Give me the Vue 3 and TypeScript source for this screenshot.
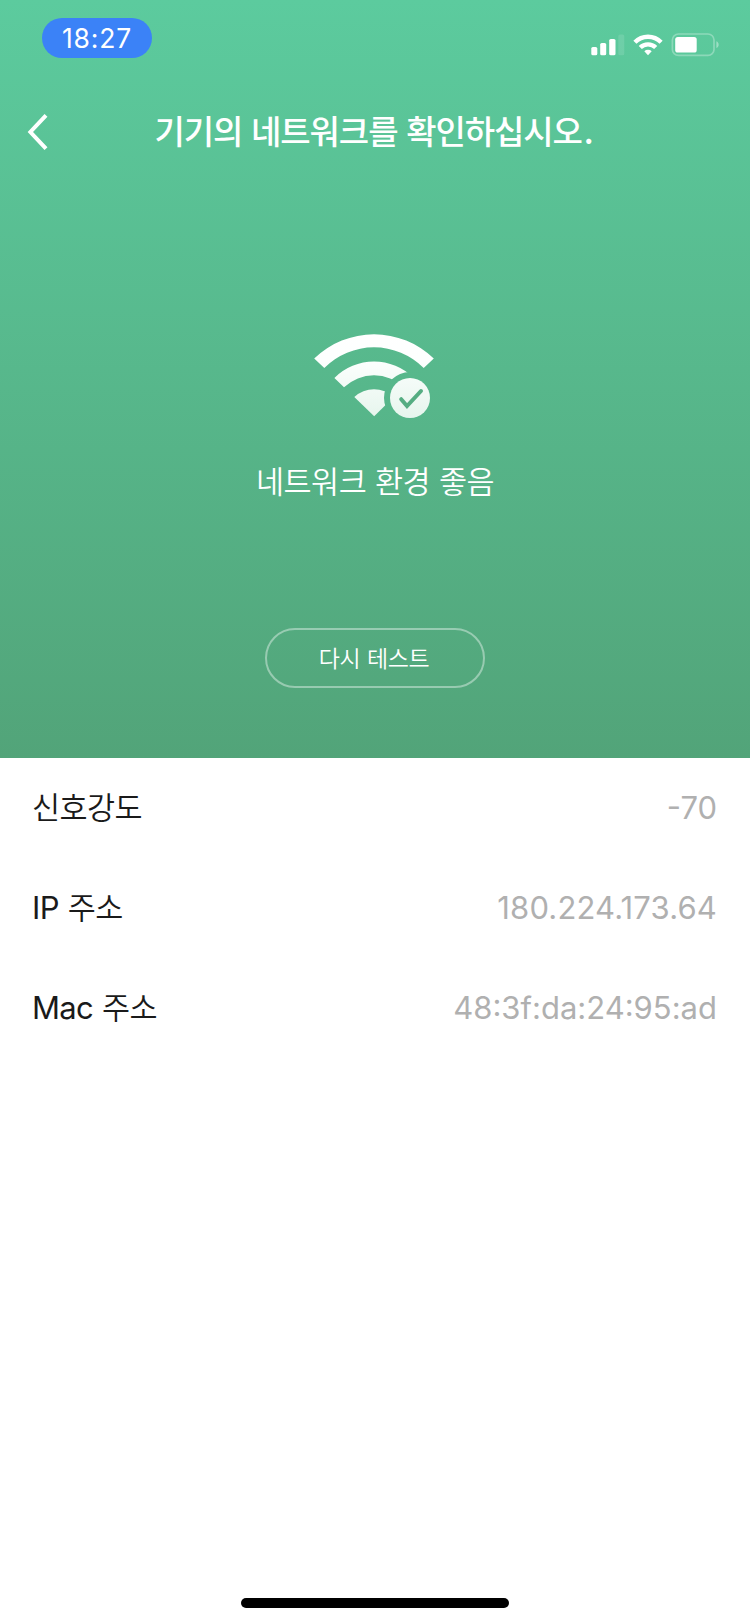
<script setup lang="ts">
interface InfoRow {
  latin: string
  hangul: string
  value: string
  kind: string
}

const rows: InfoRow[] = [
  { latin: '', hangul: '신호강도', value: '-70', kind: 'signal' },
  { latin: 'IP', hangul: '주소', value: '180.224.173.64', kind: 'ip' },
  { latin: 'Mac', hangul: '주소', value: '48:3f:da:24:95:ad', kind: 'mac' },
]
</script>

<template>
  <main class="screen">
    <section class="hero">
      <header class="status">
        <div class="time"><span>18:27</span></div>
        <svg class="indicators" width="132" height="28" viewBox="590 31 132 28" fill="#fff">
          <rect x="591.3" y="47" width="6" height="8.3" rx="1.6" />
          <rect x="600.2" y="43" width="6" height="12.3" rx="1.6" />
          <rect x="609.2" y="39" width="6.3" height="16.3" rx="1.6" />
          <rect x="618.3" y="34.5" width="6" height="20.8" rx="1.6" opacity=".12" />
          <g fill="none" stroke="#fff" stroke-width="4.4">
            <path d="M634.9 42.2a18.6 18.6 0 0 1 26.2 0" />
            <path d="M640.3 47.5a11 11 0 0 1 15.4 0" />
          </g>
          <path d="M644.3 51.2a5.4 5.4 0 0 1 7.4 0L648 55.3z" />
          <rect x="672.4" y="34" width="41.6" height="21.4" rx="6" fill="none" stroke="#fff" stroke-width="1.7" opacity=".3" />
          <rect x="675.2" y="37" width="21.5" height="15.6" rx="2.6" />
          <path d="M716.4 41.3c3 1.2 3 5.6 0 6.8z" opacity=".4" />
        </svg>
      </header>

      <nav class="navbar">
        <svg class="back" width="22" height="38" viewBox="0 0 22 38" fill="none" stroke="#fff" stroke-width="4">
          <path d="M19 2.4 3.4 19 19 35.6" />
        </svg>
        <h1 class="title">기기의 네트워크를 확인하십시오<span class="stop">.</span></h1>
      </nav>

      <svg class="wifi" width="124" height="88" viewBox="313 332 124 88">
        <defs>
          <linearGradient id="shade" gradientUnits="userSpaceOnUse" x1="0" y1="334" x2="0" y2="418">
            <stop offset="0" stop-color="#fff" />
            <stop offset=".3" stop-color="#fdfffe" />
            <stop offset="1" stop-color="#e6f5ed" />
          </linearGradient>
          <mask id="cut" maskUnits="userSpaceOnUse" x="313" y="332" width="124" height="88">
            <rect x="313" y="332" width="124" height="88" fill="#fff" />
            <circle cx="410" cy="398" r="26" fill="#000" />
          </mask>
        </defs>
        <g fill="url(#shade)">
          <g mask="url(#cut)">
            <path d="M314.2 358.5A86 86 0 0 1 433.8 358.5L423.7 368A70 70 0 0 0 324.3 368Z" />
            <path d="M334.4 378A56 56 0 0 1 413.6 378L404 387.3A43.5 43.5 0 0 0 344 387.3Z" />
            <path d="M354.3 397A29 29 0 0 1 393.7 397L374.2 416.2Z" />
          </g>
          <circle cx="410" cy="398" r="20" />
        </g>
        <path d="M401.2 399.2 407 406 421 391" fill="none" stroke="#55ad82" stroke-width="4" stroke-linecap="round" />
      </svg>
      <p class="state">네트워크 환경 좋음</p>
      <button class="retry" type="button">다시 테스트</button>
    </section>

    <section class="info">
      <div v-for="row in rows" :key="row.kind" class="row">
        <span class="label"><span v-if="row.latin" class="latin">{{ row.latin }}</span><span class="hangul">{{ row.hangul }}</span></span>
        <span :class="['value', row.kind]">{{ row.value }}</span>
      </div>
    </section>
    <div class="home-bar"></div>
  </main>
</template>

<style>
body {
  margin: 0;
  background: #fff;
}
</style>

<style scoped>
.screen {
  display: flex;
  flex-direction: column;
  width: 750px;
  height: 1624px;
  overflow: hidden;
  background: #fff;
  font-family: "Noto Sans CJK KR", sans-serif;
}
.hero {
  display: flex;
  flex-direction: column;
  align-items: center;
  height: 758px;
  background: linear-gradient(#5ccb9e, #52a479);
  color: #fff;
}
.status {
  display: flex;
  justify-content: space-between;
  box-sizing: border-box;
  width: 100%;
  height: 88px;
  padding: 18px 28px 0 42px;
}
.time {
  display: flex;
  align-items: center;
  justify-content: center;
  box-sizing: border-box;
  width: 110px;
  height: 40px;
  padding-top: 1px;
  border-radius: 20px;
  background: #3b82f7;
  font: 400 26.5px/39px Inter, sans-serif;
  letter-spacing: 0.8px;
}
.indicators {
  margin-top: 13px;
}
.navbar {
  display: grid;
  grid-template-columns: 60px 1fr 60px;
  align-items: center;
  width: 100%;
  height: 88px;
}
.back {
  margin-left: 27px;
}
.title {
  margin: 0;
  padding: 0 3px 5px 0;
  text-align: center;
  white-space: nowrap;
  font-size: 33px;
  line-height: 50px;
  font-weight: 500;
  letter-spacing: -1.1px;
  word-spacing: 2.5px;
}
.stop {
  margin-left: 2px;
}
.wifi {
  margin-top: 156px;
}
.state {
  margin: 36px 0 0;
  height: 50px;
  line-height: 48px;
  font-size: 30.5px;
  font-weight: 350;
  letter-spacing: -0.5px;
  word-spacing: 2.5px;
}
.retry {
  box-sizing: border-box;
  width: 220px;
  height: 60px;
  margin-top: 122px;
  padding: 0 2px 2px 0;
  border: 2px solid rgba(255, 255, 255, 0.4);
  border-radius: 30px;
  background: transparent;
  color: #fff;
  font: 350 23px/54px "Noto Sans CJK KR", sans-serif;
  letter-spacing: -0.4px;
  word-spacing: 2px;
}
.info {
  display: flex;
  flex-direction: column;
}
.row {
  display: flex;
  align-items: center;
  justify-content: space-between;
  height: 100px;
  padding: 0 33px 0 32px;
}
.label {
  display: flex;
  align-items: center;
  gap: 9px;
  color: #1a1a1a;
  line-height: 46px;
}
.hangul {
  padding-bottom: 5px;
  font-size: 30.5px;
  font-weight: 350;
  letter-spacing: -0.6px;
}
.latin,
.value {
  font-family: Inter, sans-serif;
  font-size: 31px;
}
.latin {
  letter-spacing: -0.7px;
}
.value {
  padding-bottom: 2px;
  color: #b0b0b0;
}
.ip {
  letter-spacing: 0.15px;
}
.home-bar {
  width: 268px;
  height: 10px;
  margin: auto auto 16px;
  border-radius: 5px;
  background: #000;
}
</style>
